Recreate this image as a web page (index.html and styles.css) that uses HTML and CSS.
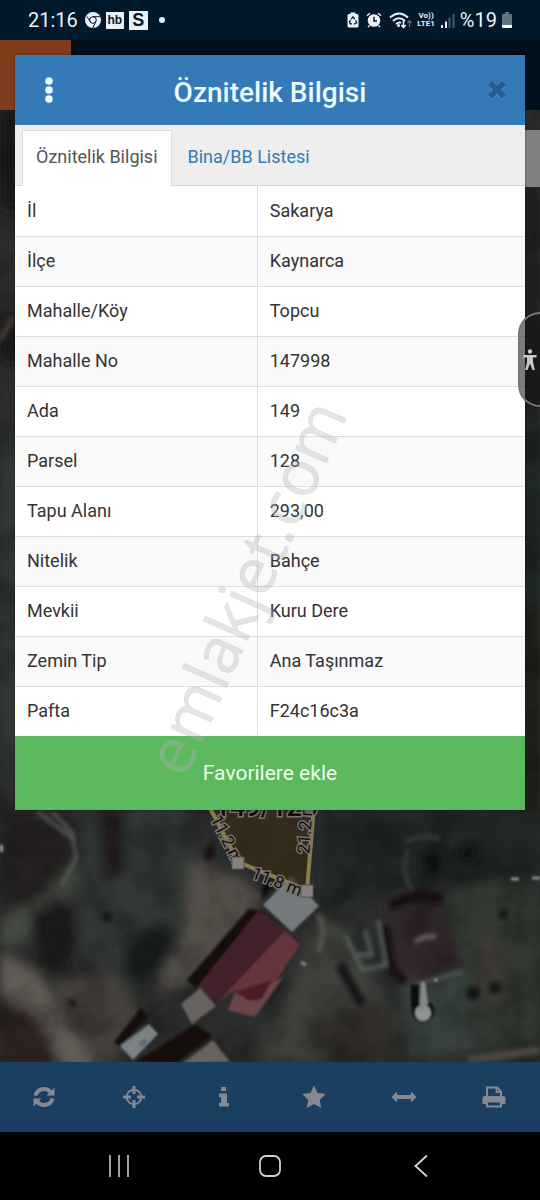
FILE: index.html
```html
<!DOCTYPE html>
<html lang="tr">
<head>
<meta charset="utf-8">
<meta name="viewport" content="width=device-width, initial-scale=1">
<title>Öznitelik Bilgisi</title>
<link rel="stylesheet" href="styles.css">
</head>
<body>
<header class="status">
  <div class="status-group">
    <time class="clock">21:16</time>
    <svg class="chrome" width="16" height="16" viewBox="0 0 16 16" aria-hidden="true"><circle cx="8" cy="8" r="8" fill="#e9f1f6"/><g fill="none" stroke="#04182b" stroke-width="1"><circle cx="8" cy="8" r="3.3"/><path d="M2 4.5 5 9.5M8 4.7H15M11 9.5 7.7 16"/></g></svg>
    <span class="badge badge-hb">hb</span>
    <span class="badge badge-s">S</span>
    <span class="dot"></span>
  </div>
  <div class="status-group status-right">
    <svg width="12" height="16" viewBox="0 0 12 16" aria-hidden="true"><path d="M3.5 2V.5h5V2H10a1.5 1.5 0 0 1 1.500 1.500v10.500A1.500 1.500 0 0 1 10 15.500H2A1.500 1.500 0 0 1 .5 14V3.500A1.500 1.500 0 0 1 2 2Z" fill="#e9f1f6"/><path d="M4.200 7.200 6 4.800l1.800 2.400M8.600 8.200l1 2.500-1.600 1.200H6.800M5 11.900H3.300L2.400 10l1.200-2" fill="none" stroke="#04182b" stroke-width="1.300"/></svg>
    <svg class="alarm" width="16" height="16" viewBox="0 0 16 16" aria-hidden="true"><circle cx="8" cy="8.500" r="6.300" fill="#e9f1f6"/><path d="M1 3.800 4 1.200M15 3.800 12 1.200M3.500 13.500 2 15M12.500 13.500 14 15" stroke="#e9f1f6" stroke-width="1.500"/><path d="M8 4.800V9h3" fill="none" stroke="#04182b" stroke-width="1.400"/></svg>
    <svg width="23" height="17" viewBox="0 0 23 17" aria-hidden="true"><g fill="none" stroke="#e9f1f6" stroke-width="1.900"><path d="M1 5.500Q10 -2.500 19 5.500M4 9Q10 3.500 16 9M7 12Q10 9.500 12 11"/><path d="M14.500 9v6.500M12.300 13l2.200 2.500 2.200-2.500" stroke-width="1.500"/></g><circle cx="9.500" cy="13.500" r="1.500" fill="#e9f1f6"/><path d="M20.500 15V9M18.500 11l2-2.300 2 2.300" fill="none" stroke="#5d7180" stroke-width="1.200"/></svg>
    <span class="volte"><span>Vo))</span><span>LTE1</span></span>
    <svg class="signal" width="15" height="15" viewBox="0 0 15 15" aria-hidden="true"><path d="M1 12h2v3H1zM5 8.500h2V15H5z" fill="#e9f1f6"/><path d="M8.500 4.500h2V15h-2zM12.500 1h2v14h-2z" fill="#44596a"/></svg>
    <span class="percent">%19</span>
    <svg class="battery" width="10" height="16" viewBox="0 0 10 16" aria-hidden="true"><path d="M3 0h4v2h2a1 1 0 0 1 1 1v10H0V3a1 1 0 0 1 1-1h2z" fill="#63747f"/><path d="M0 13h10v2a1 1 0 0 1-1 1H1a1 1 0 0 1-1-1z" fill="#fff"/></svg>
  </div>
</header>

<main class="stage">
  <div class="backdrop" aria-hidden="true">
    <div class="app-head"><div class="app-logo"></div></div>
    <svg class="map" viewBox="0 110 540 952" preserveAspectRatio="xMidYMax slice">
      <defs>
        <filter id="soft"><feGaussianBlur stdDeviation="6"/></filter>
        <filter id="soft2"><feGaussianBlur stdDeviation="2"/></filter>
        <filter id="edge"><feGaussianBlur stdDeviation="1"/></filter>
        <filter id="ground" x="0" y="0" width="100%" height="100%"><feTurbulence type="fractalNoise" baseFrequency=".028" numOctaves="4" seed="8"/><feColorMatrix values="0 0 0 0 0  0 0 0 0 0  0 0 0 0 0  2.500 0 0 0 -.95"/></filter>
      </defs>
      <rect y="110" width="540" height="952" fill="#2b2e2c"/>
      <g filter="url(#soft)">
        <path d="M0 110h20v100H0zM0 320h18v40H0z" fill="#191817"/>
        <path d="M0 440h20v330H0z" fill="#303834"/>
        <path d="M520 180h20v240h-20z" fill="#211e1b"/>
        <path d="M520 420h20v190h-20z" fill="#1d2521"/>
        <path d="M520 610h20v200h-20z" fill="#1f1a18"/>
        <path d="M0 810h70l10 50-35 50-45 5z" fill="#262321"/>
        <path d="M90 810h95l10 90-20 70-65 30-35-70z" fill="#323935"/>
        <path d="M95 812h30v60l-20 10z" fill="#201f1e"/>
        <path d="M0 915 40 900 75 860 80 885 40 935 0 950z" fill="#444842"/>
        <path d="M30 915 60 898 78 915 72 960 58 980 35 960z" fill="#1b1f1c"/>
        <path d="M0 950 40 975 100 1070H65L30 1020 0 990z" fill="#625c54"/>
        <path d="M0 1000 35 1015 60 1062H0z" fill="#2d2421"/>
        <path d="M50 980 110 970 140 1010 110 1070 90 1050z" fill="#443f3b"/>
        <path d="M190 860 225 870 265 895 195 980 150 1000 185 930z" fill="#544f49"/>
        <path d="M128 940 160 922 176 935 160 970 135 985 122 965z" fill="#191d1a"/>
        <path d="M325 810h215v90l-80 10-60-20-75 20z" fill="#242727"/>
        <path d="M450 885 540 875v170h-95z" fill="#323733"/>
        <path d="M320 910 350 930 390 1010 400 1062H250L290 990z" fill="#3c3f3a"/>
        <path d="M400 980 465 970 475 1050 405 1058z" fill="#38423c"/>
        <path d="M385 905 440 895 460 960 430 985 395 975z" fill="#30282a"/>
        <path d="M420 855 440 845 445 870 425 885zM460 845 480 840 475 865 455 860z" fill="#0f1211"/>
        <path d="M385 1000 400 1062H330L300 1020z" fill="#302e2a"/>
        <path d="M480 935 500 940 505 1000 480 1010z" fill="#413b36"/>
      </g>
      <rect y="110" width="540" height="952" filter="url(#ground)" opacity=".22"/>
      <g filter="url(#soft2)" fill="none">
        <path d="M38 812 75 840M52 812 72 832 76 858 62 885" stroke="#59625d" stroke-width="3"/>
        <path d="M0 340 13 318" stroke="#463c36" stroke-width="5"/>
        <path d="M405 842Q415 835 440 838M408 850Q400 870 412 890" stroke="#353d39" stroke-width="4"/>
        <path d="M345 935 362 970 386 965 378 920M365 930 372 955 357 955" stroke="#565e5a" stroke-width="4"/>
        <path d="M384 925 392 970 405 982" stroke="#121111" stroke-width="7"/>
        <path d="M340 965 362 1005" stroke="#181512" stroke-width="9"/>
        <path d="M318 915Q328 930 318 952" stroke="#55564e" stroke-width="5"/>
        <path d="M390 905 420 895 442 900" stroke="#171111" stroke-width="10"/>
        <path d="M415 942 424 937 436 936" stroke="#827b78" stroke-width="3"/>
        <path d="M415 985 440 978 462 972" stroke="#565d58" stroke-width="3"/>
        <path d="M468 1060 540 1050" stroke="#4c4740" stroke-width="8"/>
        <circle cx="503" cy="914" r="5" fill="#151614"/><circle cx="473" cy="993" r="7" fill="#131614"/><circle cx="495" cy="988" r="6" fill="#131614"/>
        <circle cx="107" cy="917" r="5" fill="#181411"/><circle cx="72" cy="1003" r="4" fill="#1c1613"/>
        <path d="M205 850 214 840 214 855 206 862z" fill="#160c0a"/>
      </g>
      <g filter="url(#edge)">
        <path d="M187 980 249 909 264 912 197 988z" fill="#180909"/>
        <path d="M197 987 258 911 287 930 218 1002z" fill="#43212a"/>
        <path d="M218 1002 285 931 300 945 268 993 235 990z" fill="#65343b"/>
        <path d="M235 992 270 985 285 975 255 1017 228 1010z" fill="#6b4448"/>
        <path d="M235 992 272 980 262 999 250 1001z" fill="#4b1f22"/>
        <path d="M262 890 266 877 272 886 263 899z" fill="#100b0a"/>
        <path d="M263 905 291 876 319 906 292 932z" fill="#767a7c"/>
        <path d="M181 1004 200 988 216 1006 192 1024z" fill="#686461"/>
        <path d="M114 1042 141 1008 148 1017 120 1047z" fill="#150b09"/>
        <path d="M120 1046 149 1024 158 1034 133 1060z" fill="#7c8183"/>
        <path d="M138 1045 143 1039 148 1041 144 1046z" fill="#51707e"/>
        <path d="M136 1062 195 1024 212 1036 176 1064z" fill="#160e0b"/>
        <path d="M182 1064 213 1040 230 1062z" fill="#68625e"/>
        <path d="M411 985h8v22h-8z" fill="#0e0f0f"/>
        <circle cx="423" cy="1011" r="11" fill="#0b0d0d"/>
        <circle cx="423" cy="1013" r="8" fill="#8e9695"/>
        <path d="M421 982h4l3 21-3 8h-6l1-12z" fill="#838b88"/>
        <path d="M511 879h8M532 878h8M434 980h4M301 962l5 3" stroke="#898b87" stroke-width="3"/>
        <path d="M0 845h3v7H0z" fill="#9a9a96"/>
      </g>
      <path d="M209 806 238 862 307 890 314 806z" fill="#3a2b16" fill-opacity=".65"/>
      <path d="M209 806 238 862 307 890 314 806" fill="none" stroke="#8b7950" stroke-width="4"/>
      <g class="map-text" text-anchor="middle">
        <text class="parcel" x="266" y="816">149/128</text>
        <text transform="translate(222 842) rotate(63)">11.2 m</text>
        <text transform="translate(275 887) rotate(21)">11.8 m</text>
        <text transform="translate(311 828) rotate(-86)">21.2 m</text>
      </g>
      <path d="M232 857h12v12h-12zM301 885h12v12h-12z" fill="#858181" stroke="#565353"/>
    </svg>
    <div class="side-tab"></div>
  </div>

  <section class="dialog" role="dialog" aria-labelledby="dialog-title">
    <header class="dialog-head">
      <button class="icon-btn" type="button" aria-label="Menü"><svg width="8" height="28" viewBox="0 0 8 28"><g fill="#e9fbff"><circle cx="4" cy="5" r="3.800"/><circle cx="4" cy="14" r="3.800"/><circle cx="4" cy="23" r="3.800"/></g></svg></button>
      <h1 class="dialog-title" id="dialog-title">Öznitelik Bilgisi</h1>
      <button class="icon-btn" type="button" aria-label="Kapat"><svg width="20" height="20" viewBox="0 0 20 20"><path d="m3 4 14 14M17 4 3 18" stroke="#5d99cb" stroke-width="5.500"/><path d="m3 3 14 14M17 3 3 17" stroke="#265c8f" stroke-width="5.500"/></svg></button>
    </header>
    <nav class="tabs">
      <a class="tab tab-active" href="#oznitelik" aria-current="page">Öznitelik Bilgisi</a>
      <a class="tab" href="#bina">Bina/BB Listesi</a>
    </nav>
    <table class="facts" id="oznitelik">
      <tbody>
        <tr><th scope="row">İl</th><td>Sakarya</td></tr>
        <tr><th scope="row">İlçe</th><td>Kaynarca</td></tr>
        <tr><th scope="row">Mahalle/Köy</th><td>Topcu</td></tr>
        <tr><th scope="row">Mahalle No</th><td>147998</td></tr>
        <tr><th scope="row">Ada</th><td>149</td></tr>
        <tr><th scope="row">Parsel</th><td>128</td></tr>
        <tr><th scope="row">Tapu Alanı</th><td>293,00</td></tr>
        <tr><th scope="row">Nitelik</th><td>Bahçe</td></tr>
        <tr><th scope="row">Mevkii</th><td>Kuru Dere</td></tr>
        <tr><th scope="row">Zemin Tip</th><td>Ana Taşınmaz</td></tr>
        <tr><th scope="row">Pafta</th><td>F24c16c3a</td></tr>
      </tbody>
    </table>
    <button class="favorite" type="button">Favorilere ekle</button>
    <span class="watermark">emlakjet.com</span>
  </section>

  <button class="access" type="button" aria-label="Erişilebilirlik"><svg width="14" height="22" viewBox="0 0 14 22"><circle cx="7" cy="2.500" r="2.200" fill="#c9c9c9"/><path d="M.5 6h13v2.500H10V13l1.800 8H9.500L7 14.500 4.500 21H2.200L4 13V8.500H.5z" fill="#c9c9c9"/></svg></button>
</main>

<nav class="toolbar" aria-label="Harita araçları">
  <button type="button" aria-label="Yenile"><svg width="22" height="22" viewBox="0 0 22 22"><g fill="none" stroke="#86898f" stroke-width="4"><path d="M2.500 9.500A8.700 8.700 0 0 1 17.500 6"/><path d="M19.500 12.500A8.700 8.700 0 0 1 4.500 16"/></g><path d="M21.500 1.500V9.500H13.500zM.5 20.500V12.500H8.500z" fill="#86898f"/></svg></button>
  <button type="button" aria-label="Konum"><svg width="22" height="22" viewBox="0 0 22 22"><circle cx="11" cy="11" r="7.300" fill="none" stroke="#86898f" stroke-width="2"/><path d="M11 0v8M11 14v8M0 11h8M14 11h8" stroke="#86898f" stroke-width="3"/></svg></button>
  <button type="button" aria-label="Bilgi"><svg width="12" height="22" viewBox="0 0 12 22"><path d="M3 1h5v4H3zM1 7.500h8V17h2v3.500H1V17h2v-6H1z" fill="#86898f"/></svg></button>
  <button type="button" aria-label="Favoriler"><svg width="24" height="24" viewBox="0 0 24 24"><path d="m12 .5 3.500 7.600 8.200 1-6 5.800 1.500 8.200-7.200-4-7.200 4 1.500-8.200-6-5.800 8.200-1z" fill="#86898f"/></svg></button>
  <button type="button" aria-label="Ölçüm"><svg width="26" height="12" viewBox="0 0 26 12"><path d="M.5 6 6 .5V4h14V.5L25.500 6 20 11.500V8H6v3.500z" fill="#86898f"/></svg></button>
  <button type="button" aria-label="Yazdır"><svg width="24" height="22" viewBox="0 0 24 22"><path d="M5 10.500V1.500h10l4 4v5" fill="none" stroke="#86898f" stroke-width="2"/><path d="M14.500 1v5H19" fill="none" stroke="#86898f" stroke-width="1.800"/><path d="M3 10h18a2.500 2.500 0 0 1 2.500 2.500V18H20v3.500H4V18H.5v-5.500A2.500 2.500 0 0 1 3 10zm3 6.500v3h12v-3z" fill="#86898f" fill-rule="evenodd"/></svg></button>
</nav>

<nav class="system" aria-label="Sistem gezinme">
  <button type="button" aria-label="Son uygulamalar"><svg width="20" height="22" viewBox="0 0 20 22"><path d="M1 0v22M10 0v22M19 0v22" stroke="#bdbdbd" stroke-width="1.700"/></svg></button>
  <button type="button" aria-label="Ana ekran"><svg width="22" height="22" viewBox="0 0 22 22"><rect x="1" y="1" width="20" height="20" rx="6" fill="none" stroke="#cfcfcf" stroke-width="1.800"/></svg></button>
  <button type="button" aria-label="Geri"><svg width="14" height="22" viewBox="0 0 14 22"><path d="M13 .5 1.500 11 13 21.500" fill="none" stroke="#d4d4d4" stroke-width="1.900"/></svg></button>
</nav>
</body>
</html>
```

FILE: styles.css
```css
* { box-sizing: border-box; }

body {
  margin: 0;
  min-height: 100vh;
  display: flex;
  flex-direction: column;
  background: #000;
  color: #333;
  font: 18px/24px Roboto, "Noto Sans", sans-serif;
}

button {
  border: 0;
  padding: 0;
  background: none;
  font: inherit;
  cursor: pointer;
}

svg { display: block; }

/* Phone status bar */
.status {
  height: 40px;
  padding: 0 28px;
  display: flex;
  justify-content: space-between;
  align-items: center;
  background: #02182b;
  color: #e9f1f6;
}

.status-group { display: flex; align-items: center; gap: 5px; }
.clock, .percent { font-size: 20px; }
.clock { margin-right: 2px; }

.badge {
  display: grid;
  place-items: center;
  background: #e9f1f6;
  color: #02182b;
  font-family: "Liberation Sans", sans-serif;
  font-weight: 700;
}

.badge-hb { width: 18px; height: 17px; font-size: 12px; line-height: 16px; }
.badge-s { width: 19px; height: 19px; font-size: 18px; line-height: 18px; }
.dot { width: 6px; height: 6px; margin-left: 6px; border-radius: 50%; background: #e9f1f6; }
.volte { display: flex; flex-direction: column; align-items: center; font-size: 8px; line-height: 8px; font-weight: 700; }
.alarm { margin: 0 2px; }

/* Map area with the dialog over it */
.stage { flex: 1; position: relative; display: flow-root; overflow: hidden; }
.backdrop { position: absolute; inset: 0; display: flex; flex-direction: column; }
.app-head { flex: none; height: 70px; background: #020f1d; }
.app-logo { width: 71px; height: 70px; background: #803c1b; }
.map { flex: 1; width: 100%; min-height: 0; }
.map-text { font: 17px Roboto, sans-serif; fill: #0c0c0c; stroke: #77736c; stroke-width: 3px; paint-order: stroke; }
.parcel { font-size: 27px; font-weight: 500; }
.side-tab { position: absolute; top: 90px; right: 0; width: 16px; height: 57px; background: #808080; }

.dialog {
  position: relative;
  margin: 15px 15px 0;
  background: #fff;
  box-shadow: 0 0 2px rgba(0, 0, 0, .5);
}

.dialog-head {
  height: 70px;
  padding: 0 18px;
  display: flex;
  align-items: center;
  justify-content: space-between;
  background: #337ab7;
}

.dialog-title { margin: 6px 0 0; font-size: 28px; line-height: 36px; font-weight: 500; color: #e9fbff; }
.icon-btn { width: 32px; height: 40px; display: grid; place-items: center; }
.icon-btn:last-child { justify-items: end; }

.tabs {
  height: 61px;
  padding: 5px 7px 0;
  display: flex;
  gap: 2px;
  background: #eee;
  border-bottom: 1px solid #d5d5d5;
}

.tab {
  height: 56px;
  padding: 14px 13px 0;
  border: 1px solid transparent;
  border-bottom: 0;
  color: #337ab7;
  text-decoration: none;
}

.tab-active { background: #fff; border-color: #ddd; color: #555; }

.facts { width: 100%; table-layout: fixed; border-collapse: collapse; }
.facts th, .facts td { height: 50px; padding: 0 12px; text-align: left; font-weight: 400; border-bottom: 1px solid #ddd; }
.facts th { width: 47.5%; border-right: 1px solid #ddd; }
.facts tr:nth-child(even) { background: #f9f9f9; }
.facts tr:last-child > * { border-bottom: 0; }

.favorite { display: block; width: 100%; height: 74px; font-size: 21px; background: #5cb85c; color: #edffed; }

.watermark {
  position: absolute;
  left: 45%;
  bottom: 223px;
  transform: translate(-50%, 50%) rotate(-66deg);
  font: 64px/64px "Open Sans", sans-serif;
  color: rgba(180, 180, 180, .34);
  -webkit-text-stroke: 1px rgba(180, 180, 180, .2);
  pointer-events: none;
}

/* Accessibility handle at the window edge */
.access {
  position: absolute;
  top: 272px;
  right: 0;
  width: 22px;
  height: 95px;
  display: grid;
  place-items: center;
  border: 2px solid #777;
  border-right: 0;
  border-radius: 22px 0 0 22px;
  background: rgba(20, 20, 20, .55);
}

/* Map tools */
.toolbar {
  height: 70px;
  display: grid;
  grid-template-columns: repeat(6, 1fr);
  background: #1b3f60;
  border-bottom: 8px solid #1b3c68;
}

.toolbar button { display: grid; place-items: center; padding: 8px 2px 0 0; }

/* Phone navigation bar */
.system { height: 68px; padding: 0 44px; display: grid; grid-template-columns: repeat(3, 1fr); background: #000; }
.system button { display: grid; place-items: center; }
```
